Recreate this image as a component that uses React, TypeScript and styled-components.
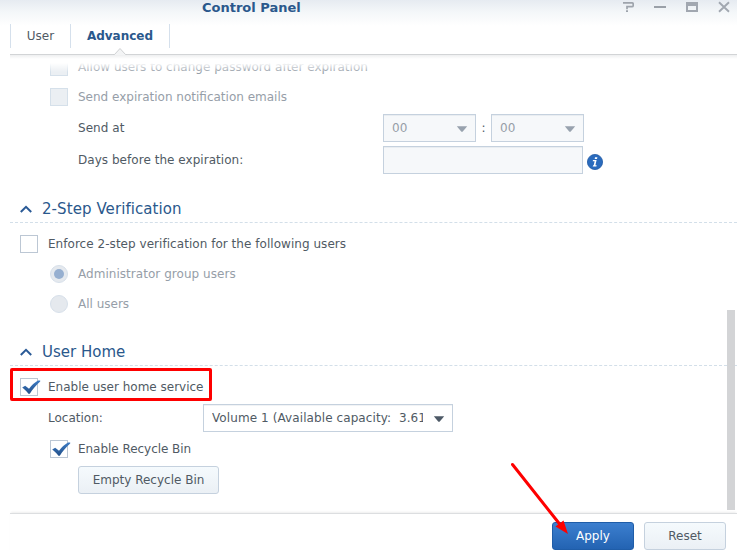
import React from "react";
import styled, { createGlobalStyle, css } from "styled-components";

const GlobalStyle = createGlobalStyle`
  * { box-sizing: border-box; }
  html, body { margin: 0; padding: 0; background: #fff; overflow: hidden; }
  body { font: 12px/16px "DejaVu Sans", Verdana, sans-serif; color: #505a64; }
`;

const Window = styled.div`
  position: relative;
  display: flex;
  flex-direction: column;
  width: 737px;
  height: 554px;
  overflow: hidden;
  background: linear-gradient(#e6ebf1 0, #f4f7f9 12px, #fff 26px);
`;

const TitleBar = styled.header`
  display: flex;
  height: 24px;
  flex: none;
  padding-left: 202px;
  justify-content: space-between;
`;

const Title = styled.h1`
  margin: 0;
  font-size: 13px;
  line-height: 16px;
  font-weight: bold;
  color: #2a588c;
  white-space: nowrap;
`;

const WindowControls = styled.div`
  display: flex;
  gap: 20px;
  padding: 1px 7px 0 0;
  svg { display: block; width: 12px; height: 12px; }
`;

const TabBar = styled.nav`
  position: relative;
  display: flex;
  flex: none;
  height: 31px;
  margin-left: 10px;
  border-bottom: 1px solid #d2d4d6;
`;

const Tab = styled.div<{ $active?: boolean; $width: number }>`
  width: ${(p) => p.$width}px;
  height: 24px;
  line-height: 24px;
  text-align: center;
  white-space: nowrap;
  border-left: 1px solid #d5e0ec;
  &:last-of-type { border-right: 1px solid #d5e0ec; }
  ${(p) => p.$active && css`color: #2a588c; font-weight: bold;`}
`;

const TabNotch = styled.svg`
  position: absolute;
  left: 103px;
  top: 23px;
  width: 14px;
  height: 9px;
`;

const Scroller = styled.main`
  position: relative;
  height: 458px;
  flex: none;
  margin-left: 10px;
  overflow: hidden;
`;

const FadeTop = styled.div`
  position: absolute;
  top: 0;
  left: 0;
  right: 0;
  height: 17px;
  background: linear-gradient(#fff 8px, rgba(255, 255, 255, 0));
`;

const TopShadow = styled.div`
  position: absolute;
  inset: 0 0 auto;
  height: 4px;
  background: linear-gradient(#eeeff0, #fff);
`;

const Form = styled.form`
  display: flex;
  flex-direction: column;
  margin-top: -3px;
`;

const Row = styled.div<{ $indent?: number; $tall?: boolean }>`
  display: flex;
  align-items: center;
  flex: none;
  height: ${(p) => (p.$tall ? 32 : 30)}px;
  padding-left: ${(p) => p.$indent ?? 10}px;
`;

const Text = styled.span<{ $dim?: boolean; $track?: number; $width?: number }>`
  flex: none;
  white-space: pre;
  color: ${(p) => (p.$dim ? "#969ea8" : "#505a64")};
  letter-spacing: ${(p) => p.$track ?? 0}px;
  ${(p) => p.$width && css`width: ${p.$width}px;`}
`;

const SectionTitle = styled.h2<{ $track?: number }>`
  display: flex;
  align-items: center;
  gap: 10px;
  flex: none;
  height: 28px;
  margin: 19px 0 6px;
  padding-left: 10px;
  border-bottom: 1px dashed #d3dfe9;
  font-size: 15px;
  font-weight: normal;
  color: #2a588c;
  letter-spacing: ${(p) => p.$track ?? 0}px;
  svg { width: 12px; height: 8px; }
`;

const Box = styled.span<{ $dim?: boolean }>`
  flex: none;
  width: 18px;
  height: 18px;
  margin-right: 10px;
  border: 1px solid ${(p) => (p.$dim ? "#d5e0ea" : "#bcc7d4")};
  background: ${(p) => (p.$dim ? "#ebeff3" : "#fff")};
  svg { display: block; width: 20px; height: 18px; overflow: visible; }
`;

const Radio = styled.span<{ $on?: boolean }>`
  display: grid;
  place-items: center;
  flex: none;
  width: 18px;
  height: 18px;
  margin-right: 10px;
  border: 1px solid #d7e0ea;
  border-radius: 50%;
  background: #e5e9ee;
  &::after {
    content: "";
    width: 10px;
    height: 10px;
    border-radius: 50%;
    background: ${(p) => (p.$on ? "#96afd0" : "transparent")};
  }
`;

const Field = styled.div<{ $width: number; $dim?: boolean }>`
  display: flex;
  align-items: center;
  justify-content: space-between;
  flex: none;
  width: ${(p) => p.$width}px;
  height: 28px;
  padding: 0 7px 0 8px;
  border: 1px solid #c5d1de;
  background: ${(p) => (p.$dim ? "#f6f8fa" : "#fff")};
  box-shadow: inset 0 1px 0 ${(p) => (p.$dim ? "#e9edf1" : "#f1f3f5")};
  svg { flex: none; width: 12px; height: 6px; margin-top: 1px; }
`;

const Clip = styled.span`
  width: 211px;
  overflow: hidden;
  white-space: pre;
`;

const Colon = styled.span`
  width: 15px;
  text-align: center;
`;

const Info = styled.svg`
  width: 16px;
  height: 16px;
  margin: 3px 0 0 4px;
`;

const Button = styled.button<{ $primary?: boolean; $width: number }>`
  width: ${(p) => p.$width}px;
  height: 28px;
  flex: none;
  padding: 0;
  font: inherit;
  white-space: nowrap;
  border-radius: 3px;
  color: #505a64;
  border: 1px solid #c5d1de;
  background: linear-gradient(#f5fafd, #ebf0f5);
  ${(p) => p.$primary && css`
    color: #fff;
    border-color: #1f5da8;
    background: linear-gradient(#3c7fcf, #2363b2);
  `}
`;

const ScrollThumb = styled.div`
  position: absolute;
  left: 717px;
  top: 255px;
  width: 8px;
  height: 200px;
  background: #d3d4d6;
`;

const Footer = styled.footer`
  display: flex;
  justify-content: flex-end;
  gap: 10px;
  flex: none;
  height: 41px;
  margin-left: 10px;
  padding: 8px 11px 0 0;
  border-top: 1px solid #dcdee0;
  box-shadow: 0 -2px 2px -1px rgba(0, 0, 0, 0.07);
`;

const Highlight = styled.div`
  position: absolute;
  left: 10px;
  top: 368px;
  width: 202px;
  height: 33px;
  border: 3px solid #fe0000;
  border-radius: 2px;
`;

const Pointer = styled.svg`
  position: absolute;
  left: 505px;
  top: 458px;
  width: 70px;
  height: 82px;
`;

const Chevron = () => (
  <svg viewBox="0 0 12 8"><path d="M0.8 7 6 1.8 11.2 7" fill="none" stroke="#2a5a96" strokeWidth="2" /></svg>
);

const Caret = ({ color }: { color: string }) => (
  <svg viewBox="0 0 12 6"><path d="M0.8 0.3H11.2L6.6 5.7H5.4Z" fill={color} /></svg>
);

const Check = () => (
  <svg viewBox="0 0 20 18">
    <defs>
      <linearGradient id="tick" x1="0" y1="0" x2="0" y2="1">
        <stop offset="0" stopColor="#3c7bc4" />
        <stop offset="1" stopColor="#23508a" />
      </linearGradient>
    </defs>
    <path d="M1.2 8.4 4.2 6.7 8 9.7C10.7 6.3 13.5 3.5 17 1.5H19.2V2.6C15.2 6 11.8 10.3 8.8 14.8H7.4C5.7 12.2 3.7 10.2 1.2 8.4Z" fill="url(#tick)" />
  </svg>
);

export default function App() {
  return (
    <>
      <GlobalStyle />
      <Window>
        <TitleBar>
          <Title>Control Panel</Title>
          <WindowControls>
            <svg viewBox="0 0 12 12"><path d="M1 1.8H10Q11.2 1.8 11.2 3V4.4Q11.2 5.7 10 5.7H5V8.2M4 10.2H6" fill="none" stroke="#9ea4ac" strokeWidth="1.7" /></svg>
            <svg viewBox="0 0 12 12"><path d="M0 6H12" stroke="#9aa0a8" strokeWidth="2" /></svg>
            <svg viewBox="0 0 12 12"><path d="M0 1H12V11H0ZM2 5V9H10V5Z" fillRule="evenodd" fill="#a1a7b0" /></svg>
            <svg viewBox="0 0 12 12"><path d="M1 1.3 11 10.7M11 1.3 1 10.7" stroke="#a1a7b0" strokeWidth="1.9" /></svg>
          </WindowControls>
        </TitleBar>

        <TabBar>
          <Tab $width={60}>User</Tab>
          <Tab $width={100} $active>Advanced</Tab>
          <TabNotch viewBox="0 0 14 9">
            <path d="M1 8 7 1.5 13 8V9H1Z" fill="#f3f4f5" />
            <path d="M0 7.5H1.5L7 1.5 12.5 7.5H14" fill="none" stroke="#cfd1d3" />
          </TabNotch>
        </TabBar>

        <Scroller>
          <Form>
            <Row $indent={40}><Box $dim /><Text $dim $track={0.01}>Allow users to change password after expiration</Text></Row>
            <Row $indent={40}><Box $dim /><Text $dim>Send expiration notification emails</Text></Row>
            <Row $tall $indent={68}>
              <Text $width={305} $track={0.05}>Send at</Text>
              <Field $width={93} $dim><Text $dim>00</Text><Caret color="#98a2ae" /></Field>
              <Colon>:</Colon>
              <Field $width={93} $dim><Text $dim>00</Text><Caret color="#98a2ae" /></Field>
            </Row>
            <Row $tall $indent={68}>
              <Text $width={305} $track={0.04}>Days before the expiration:</Text>
              <Field $width={200} $dim />
              <Info viewBox="0 0 16 16">
                <circle cx="8" cy="8" r="7.6" fill="#2a6bbd" stroke="#225ba5" strokeWidth="0.8" />
                <path d="M8 3.2H10.4L10 5H7.7ZM6 6H9.6L8.4 11.2H9.7L9.4 12.6H5.7L6.1 11.2H6.7L7.6 7.3H5.7Z" fill="#fff" />
              </Info>
            </Row>

            <SectionTitle $track={0.08}><Chevron />2-Step Verification</SectionTitle>
            <Row><Box /><Text $track={0.04}>Enforce 2-step verification for the following users</Text></Row>
            <Row $indent={40}><Radio $on /><Text $dim $track={0.04}>Administrator group users</Text></Row>
            <Row $indent={40}><Radio /><Text $dim>All users</Text></Row>

            <SectionTitle><Chevron />User Home</SectionTitle>
            <Row><Box><Check /></Box><Text>Enable user home service</Text></Row>
            <Row $tall $indent={38}>
              <Text $width={155}>Location:</Text>
              <Field $width={250}><Clip><Text $track={0.09}>{"Volume 1 (Available capacity:  3.61 TB)"}</Text></Clip><Caret color="#4d5966" /></Field>
            </Row>
            <Row $indent={40}><Box><Check /></Box><Text $track={-0.04}>Enable Recycle Bin</Text></Row>
            <Row $tall $indent={68}><Button type="button" $width={141}>Empty Recycle Bin</Button></Row>
          </Form>
          <FadeTop />
          <TopShadow />
          <ScrollThumb />
        </Scroller>

        <Footer>
          <Button $primary $width={82}>Apply</Button>
          <Button $width={82}>Reset</Button>
        </Footer>

        <Highlight />
        <Pointer viewBox="505 458 70 82">
          <path d="M512.5 464.5 560 524.5" stroke="#fe0000" strokeWidth="3" strokeLinecap="round" />
          <path d="M568 534 555.5 526.5 563.5 520.5Z" fill="#fe0000" />
        </Pointer>
      </Window>
    </>
  );
}
